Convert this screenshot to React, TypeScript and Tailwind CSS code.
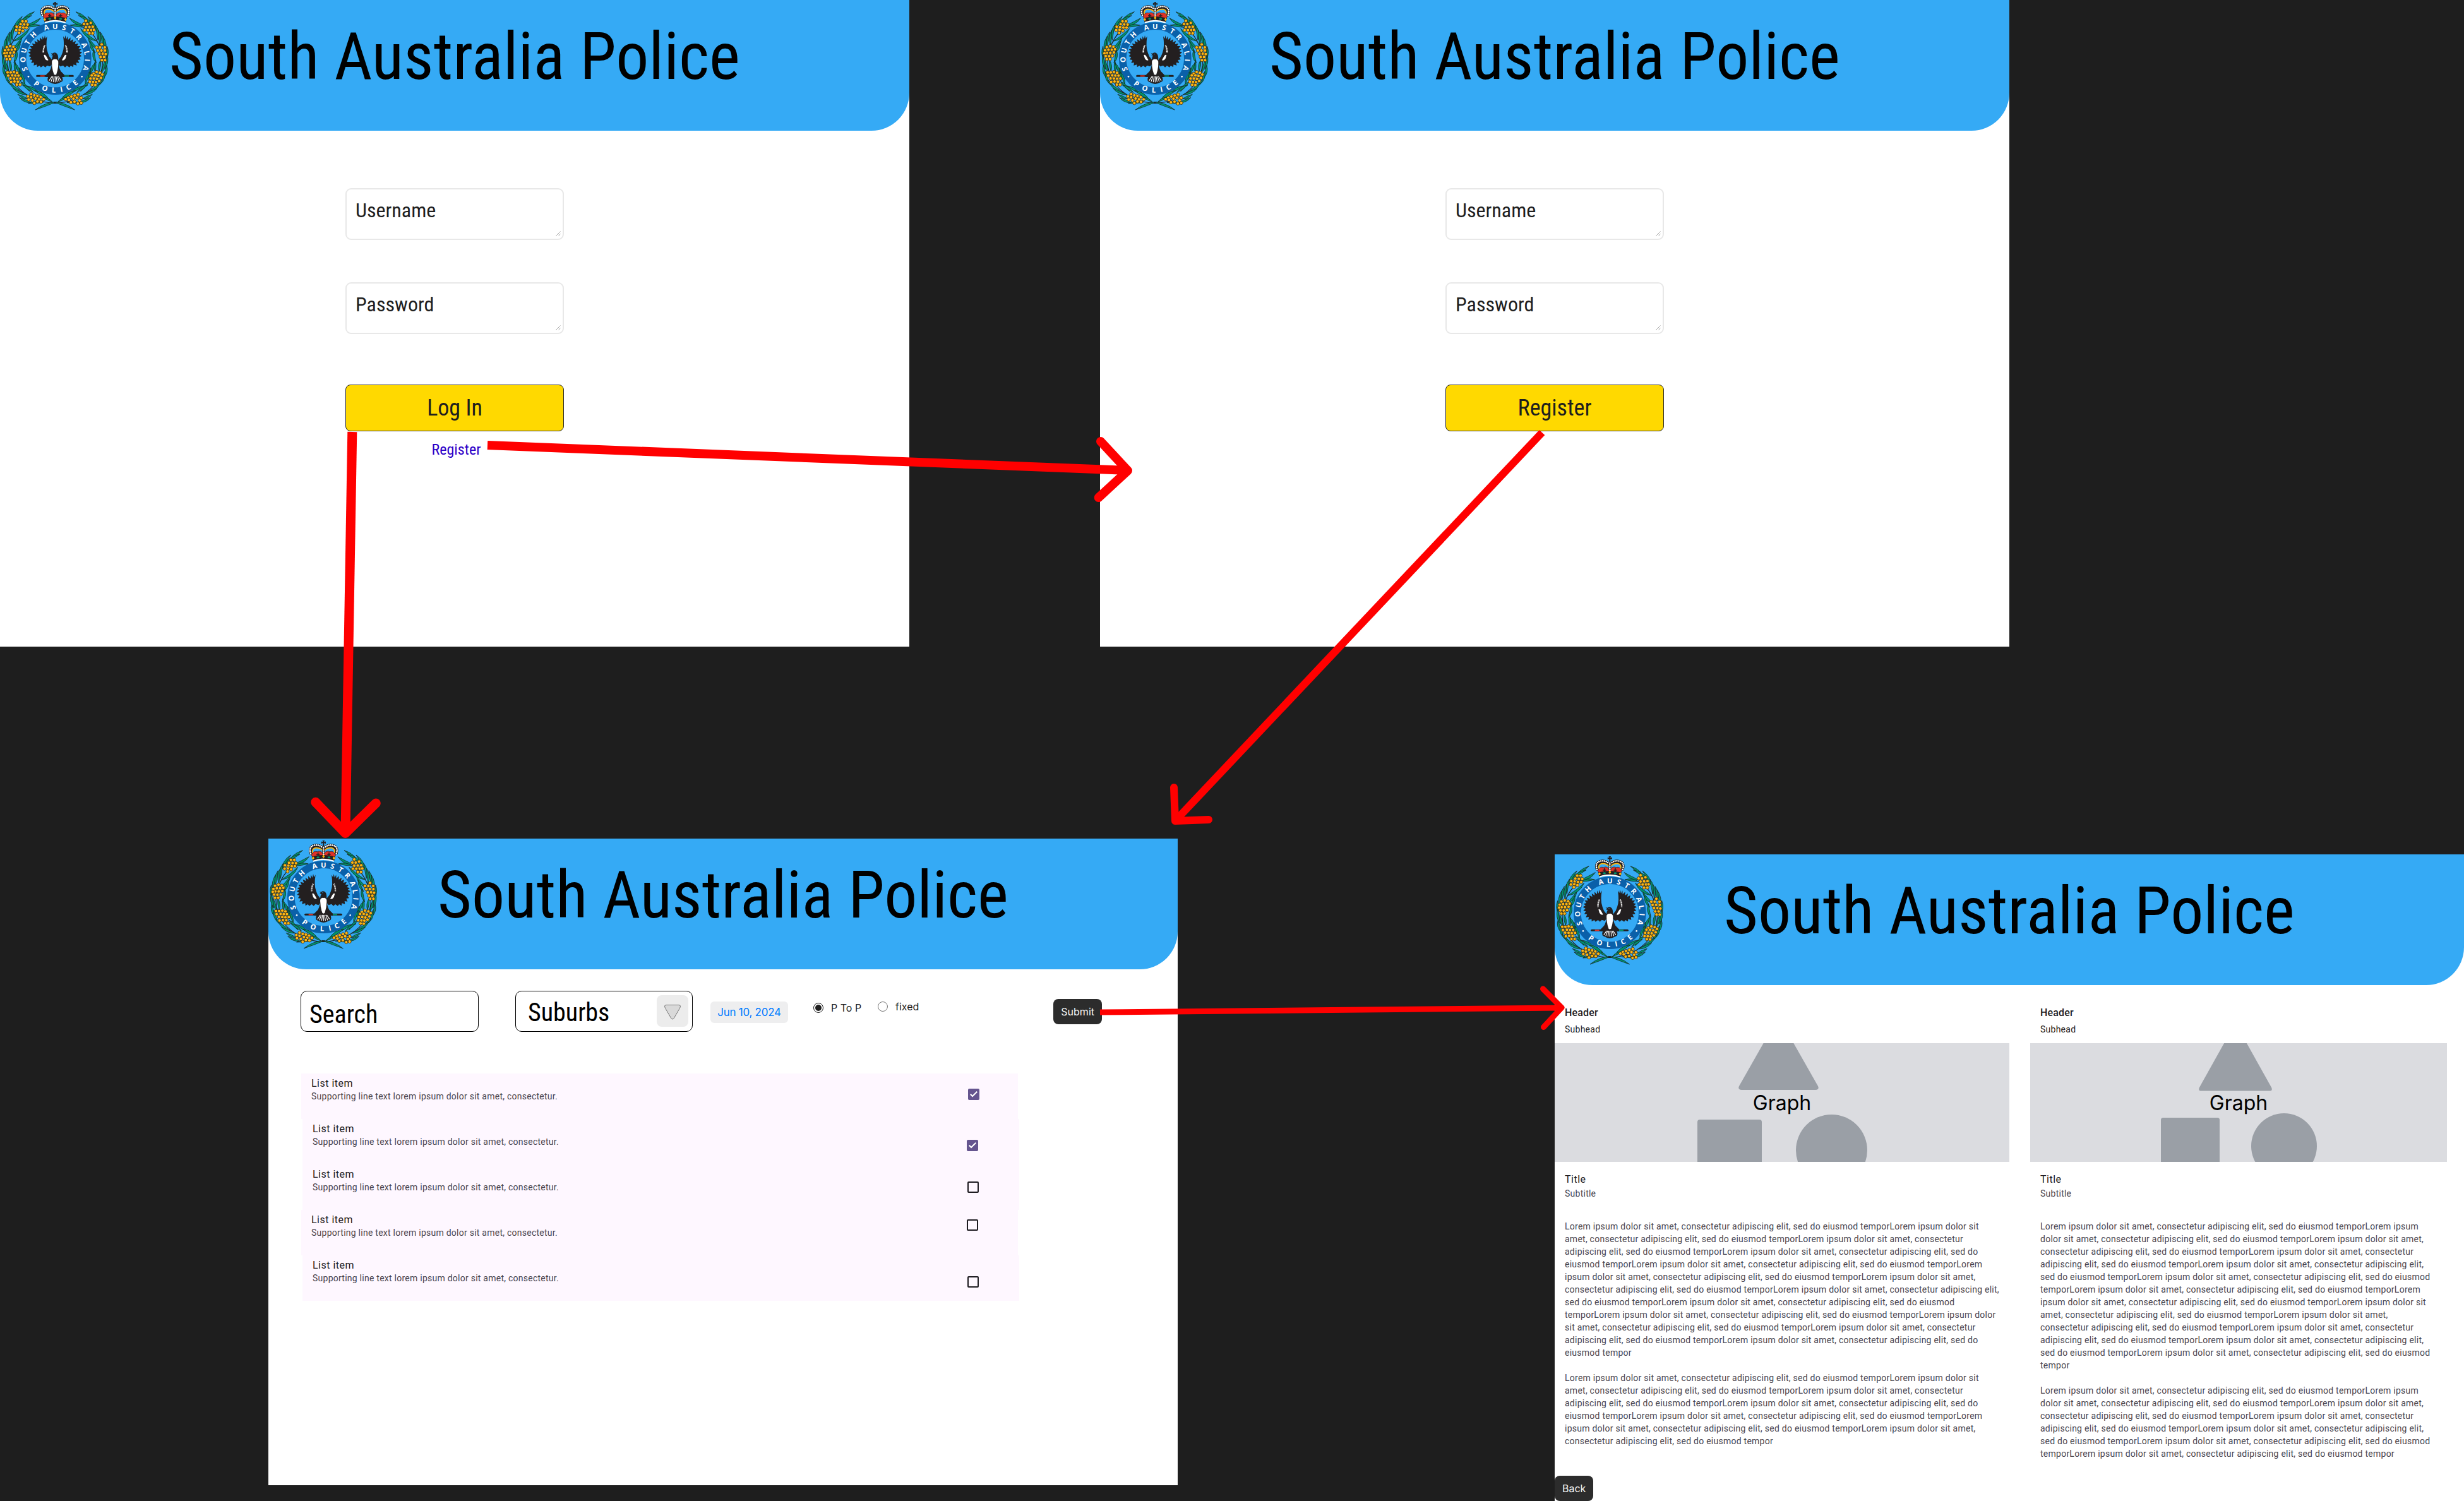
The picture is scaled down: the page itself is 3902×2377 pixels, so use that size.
import React from "react";

type Point = [number, number];
type LeafSpec = [number, number, number, number, number, number];

/* ---------- Emblem ---------- */

const RING_TOP: [string, number][] = [
  ["S", -109], ["O", -92], ["U", -75.5], ["T", -59.5], ["H", -42.6],
  ["A", -16], ["U", 0], ["S", 16.2], ["T", 32], ["R", 48], ["A", 65.5], ["L", 80], ["I", 93], ["A", 107.5],
];
const RING_BOTTOM: [string, number][] = [
  ["P", 36.4], ["O", 19], ["L", 2.5], ["I", -11.4], ["C", -25], ["E", -39.5],
];

const BERRIES: Point[] = [
  [107, 101], [123, 101], [98, 115], [115, 116], [131, 117], [79, 127], [95, 129], [111, 131], [126, 131], [77, 143], [93, 142], [108, 146], [91, 156],
  [48, 219], [64, 223], [32, 224], [56, 236], [40, 236], [71, 234], [24, 239], [33, 251], [49, 251], [66, 249], [21, 253], [27, 266], [43, 267], [59, 265], [32, 281], [47, 281],
  [36, 344], [51, 344], [66, 342], [81, 346], [39, 359], [58, 358], [73, 359], [88, 359], [50, 372], [66, 373], [81, 374], [97, 373], [53, 389], [69, 387], [85, 388], [80, 402], [95, 402],
  [148, 447], [133, 458], [148, 462], [163, 453], [178, 456], [193, 461], [136, 473], [154, 477], [169, 468], [185, 472], [207, 472], [163, 490], [178, 482], [195, 484],
  [408, 99], [399, 114], [415, 114], [431, 109], [425, 128], [408, 129], [441, 127], [402, 143], [418, 143], [434, 143], [425, 158], [440, 158], [446, 142],
  [483, 211], [459, 225], [475, 225], [498, 225], [465, 240], [482, 240], [499, 240], [472, 255], [488, 255], [502, 257], [478, 271], [494, 271], [484, 286], [499, 286],
  [459, 342], [445, 350], [475, 346], [436, 358], [453, 358], [468, 361], [486, 354], [430, 373], [446, 373], [461, 375], [480, 370], [427, 388], [442, 389], [456, 390], [471, 385], [438, 403], [453, 404],
  [371, 449], [355, 454], [339, 459], [324, 464], [365, 464], [386, 465], [312, 471], [328, 475], [349, 469], [378, 477], [337, 486], [354, 483], [370, 492], [386, 489],
];

/* base x/y, tip x/y, bend, half width */
const LEAVES: LeafSpec[] = [
  [122, 122, 193, 86, 12, 11], [124, 130, 190, 120, -6, 10], [88, 128, 163, 56, -16, 11], [72, 130, 150, 74, -14, 10],
  [62, 150, 106, 78, -10, 10], [58, 190, 70, 118, -10, 10], [62, 196, 140, 136, 16, 11], [50, 215, 56, 142, -8, 10],
  [34, 222, 46, 152, -8, 10], [22, 250, 34, 172, -8, 10], [58, 232, 105, 178, 12, 11], [70, 252, 96, 196, 10, 10],
  [18, 285, 14, 220, -6, 9], [66, 300, 78, 236, 10, 10], [26, 330, 14, 260, -8, 10], [40, 345, 24, 286, -4, 10],
  [52, 340, 44, 284, 4, 10], [70, 345, 68, 286, 6, 10], [92, 352, 72, 300, 6, 10], [30, 370, 16, 310, -8, 10],
  [42, 395, 26, 340, -6, 10], [98, 385, 92, 322, 8, 10], [118, 402, 96, 340, 6, 10], [66, 410, 36, 378, -6, 9],
  [108, 440, 46, 396, -8, 11], [128, 450, 62, 420, -8, 10], [140, 434, 98, 388, 6, 11], [158, 440, 106, 404, 6, 10],
  [132, 470, 84, 448, -4, 9], [150, 488, 92, 464, -6, 10], [190, 447, 128, 408, 8, 11], [236, 478, 164, 430, 10, 13],
  [205, 487, 134, 492, 6, 9], [268, 484, 168, 522, 8, 10], [250, 486, 204, 462, 4, 8],
];

const leafPath = ([x1, y1, x2, y2, bend, w]: LeafSpec) => {
  const dx = x2 - x1;
  const dy = y2 - y1;
  const len = Math.hypot(dx, dy);
  const nx = dy / len;
  const ny = -dx / len;
  const mx = (x1 + x2) / 2 - nx * bend;
  const my = (y1 + y2) / 2 - ny * bend;
  return `M${x1} ${y1}Q${mx + nx * w} ${my + ny * w} ${x2} ${y2}Q${mx - nx * w} ${my - ny * w} ${x1} ${y1}Z`;
};

function WreathSide() {
  return (
    <g>
      <path
        d="M268 490C200 490 120 462 74 402C36 350 28 300 42 246C56 196 84 150 130 118"
        fill="none"
        stroke="#1d1d1b"
        strokeWidth="3.5"
      />
      {LEAVES.map((leaf, i) => (
        <path key={i} d={leafPath(leaf)} fill="#00936d" stroke="#1a2421" strokeWidth="2.4" strokeLinejoin="round" />
      ))}
    </g>
  );
}

function Wing() {
  return (
    <g>
      <path
        d="M248 286L234 268L227 250Q216 222 224 172L217 184L213 168L209 186L202 172L201 190L189 178L190 195L176 186L179 202L164 194L168 210L152 206L158 219L142 219L151 231L137 235L147 243L134 250L146 257L136 267L148 271L141 283L154 285L148 299L162 297L160 311L175 307L176 319L188 312L194 320L206 312L215 320L224 311L238 316L248 304Z"
        fill="#231f20"
      />
      <path d="M213 215Q205 230 206 250" fill="none" stroke="#fff" strokeWidth="7" strokeDasharray="3.2 1.6" />
      <path d="M208 262Q214 256 220 268L230 286Q220 290 213 278Z" fill="#fff" />
    </g>
  );
}

function CrownHalf() {
  return (
    <g>
      <path d="M262 74Q250 54 232 62Q214 56 204 78L214 94L262 94Z" fill="#e03127" stroke="#231f20" strokeWidth="2" />
      <path d="M203 72Q196 42 220 36Q246 32 260 50" fill="none" stroke="#231f20" strokeWidth="16" />
      <path d="M210 68Q206 48 224 44Q244 42 258 56" fill="none" stroke="#fdb913" strokeWidth="5.5" />
      <path d="M201 72Q190 40 216 32Q240 26 258 44" fill="none" stroke="#231f20" strokeWidth="11" strokeLinecap="round" />
      <path d="M201 72Q190 40 216 32Q240 26 258 44" fill="none" stroke="#fff" strokeWidth="7.5" strokeLinecap="round" strokeDasharray="0.1 8.6" />
      <path d="M228 75h16M236 66v19" stroke="#231f20" strokeWidth="4.5" />
    </g>
  );
}

function Emblem() {
  return (
    <svg className="absolute top-0 left-0 h-[180px] w-[180px]" viewBox="0 0 540 540">
      <WreathSide />
      <g transform="translate(523 0) scale(-1 1)">
        <WreathSide />
      </g>
      {BERRIES.map(([x, y], i) => (
        <circle key={i} cx={x} cy={y} r="7.6" fill="#fdb515" stroke="#2a2413" strokeWidth="2.4" />
      ))}

      <circle cx="262" cy="278" r="154.5" fill="#35aaf5" stroke="#0a60a9" strokeWidth="35" />
      <g fill="#fff" fontFamily="Open Sans, sans-serif" fontWeight="700" fontSize="34" textAnchor="middle">
        {RING_TOP.map(([ch, a], i) => (
          <text key={i} x="262" y="137" transform={`rotate(${a} 262 278)`}>{ch}</text>
        ))}
        {RING_BOTTOM.map(([ch, a], i) => (
          <text key={i} x="262" y="440" transform={`rotate(${a} 262 278)`}>{ch}</text>
        ))}
      </g>
      <circle cx="135" cy="364" r="4" fill="#fff" />
      <circle cx="389" cy="364" r="4" fill="#fff" />

      {/* piping shrike */}
      <Wing />
      <g transform="translate(524 0) scale(-1 1)">
        <Wing />
      </g>
      <path d="M176 361H346" stroke="#231f20" strokeWidth="9" strokeLinecap="round" />
      <path d="M191 361H212" stroke="#e03127" strokeWidth="6" />
      <path d="M306 361H327" stroke="#00936d" strokeWidth="6" />
      <path d="M246 296Q244 334 228 346L218 356V366H306V356L296 346Q280 334 278 296Z" fill="#231f20" />
      <path d="M232 360Q222 374 228 386L240 392L250 397L262 399L274 397L284 392L296 386Q302 374 292 360Z" fill="#231f20" />
      <path
        d="M246 364L234 382M251 364L243 387M257 364L253 389M262 364V390M267 364L271 389M273 364L281 387M278 364L290 382"
        stroke="#fff"
        strokeWidth="3.4"
        strokeLinecap="round"
      />
      <path d="M247 284Q262 272 276 284Q280 318 268 352Q262 360 256 352Q244 318 247 284Z" fill="#fff" />
      <path d="M276 290Q280 258 266 251Q258 247 250 254L241 251L249 258L243 262L252 264Q246 272 246 290Q254 278 262 282Q270 278 276 290Z" fill="#231f20" />
      <circle cx="258" cy="257" r="1.8" fill="#35aaf5" />

      {/* crown */}
      <CrownHalf />
      <g transform="translate(524 0) scale(-1 1)">
        <CrownHalf />
      </g>
      <path d="M262 40V74" stroke="#231f20" strokeWidth="12" />
      <path d="M262 41V78" stroke="#fff" strokeWidth="7.5" strokeLinecap="round" strokeDasharray="0.1 8.6" />
      <path d="M262 10V38M252 19H272" stroke="#231f20" strokeWidth="6" />
      <path d="M257 11H267M253 14V24M271 14V24" stroke="#231f20" strokeWidth="3" />
      <path d="M206 86Q262 70 318 86L312 107Q262 92 212 107Z" fill="#231f20" />
      <path d="M212 104Q262 86 312 104L311 110Q262 94 213 110Z" fill="#fff" />
      <ellipse cx="236" cy="89" rx="7" ry="4.5" fill="#00936d" />
      <ellipse cx="288" cy="89" rx="7" ry="4.5" fill="#00936d" />
      <g fill="#fdb913">
        <path d="M262 76L268 85L262 94L256 85Z" />
        <path d="M213 85L219 93L213 100L206 93Z" />
        <path d="M311 85L318 93L311 100L305 93Z" />
      </g>
    </svg>
  );
}

/* ---------- Shared pieces ---------- */

function Header() {
  return (
    <header className="relative h-[207px] shrink-0 rounded-b-[60px] bg-[#35aaf5] pt-[29px]">
      <Emblem />
      <h1 className="text-center font-['Roboto_Condensed'] text-[104px] leading-[121px] text-black">
        South Australia Police
      </h1>
    </header>
  );
}

function Field({ label }: { label: string }) {
  return (
    <div className="relative h-[82px] w-[346px] rounded-[9px] border-2 border-[#e8e8e8] bg-white pt-[14px] pl-[14px] font-['Roboto_Condensed'] text-[32px] leading-[38px] text-[#1e1e1e]">
      {label}
      <svg className="absolute right-[3px] bottom-[4px] h-2 w-2" viewBox="0 0 8 8">
        <path d="M0.5 7.5L7.5 0.5M4.5 7.5L7.5 4.5" stroke="#a3a3a3" fill="none" />
      </svg>
    </div>
  );
}

function YellowButton({ children }: { children: React.ReactNode }) {
  return (
    <button className="mt-20 flex h-[74px] w-[346px] items-center justify-center rounded-lg border border-[#2c2c2c] bg-[#ffd900] font-['Roboto_Condensed'] text-[36px] leading-[42px] text-[#1e1e1e]">
      {children}
    </button>
  );
}

function DarkButton({ children }: { children: React.ReactNode }) {
  return (
    <button className="flex h-10 items-center rounded-lg bg-[#2c2c2c] px-3 font-['Inter'] text-base leading-none text-[#f5f5f5]">
      {children}
    </button>
  );
}

function AuthScreen({ action, link }: { action: string; link?: string }) {
  return (
    <>
      <Header />
      <div className="flex flex-col items-center pt-[91px]">
        <Field label="Username" />
        <div className="mt-[67px]">
          <Field label="Password" />
        </div>
        <YellowButton>{action}</YellowButton>
        {link && (
          <a className="mt-[15px] pl-[5px] font-['Roboto_Condensed'] text-2xl leading-7 text-[#2d00c8]">{link}</a>
        )}
      </div>
    </>
  );
}

/* ---------- Search screen ---------- */

const ROWS = [
  { checked: true, row: "ml-[52px]", box: "mt-6 mr-[61px]" },
  { checked: true, row: "ml-[54px]", box: "mt-[33px] mr-[65px]" },
  { checked: false, row: "ml-[54px]", box: "mt-[27px] mr-16" },
  { checked: false, row: "ml-[52px]", box: "mt-[15px] mr-[63px]" },
  { checked: false, row: "ml-[54px]", box: "mt-[33px] mr-16" },
];

function Checkbox({ checked, className }: { checked: boolean; className: string }) {
  return (
    <div className={className}>
      {checked ? (
        <div className="h-[18px] w-[18px] rounded-xs bg-[#65558f]">
          <svg viewBox="0 0 18 18" className="h-[18px] w-[18px]">
            <path d="M3.8 8.8L7 12L14.3 4.7" fill="none" stroke="#fff" strokeWidth="2" />
          </svg>
        </div>
      ) : (
        <div className="h-[18px] w-[18px] rounded-xs border-2 border-[#1d1b20]" />
      )}
    </div>
  );
}

function SearchScreen() {
  return (
    <>
      <Header />
      <div className="flex items-start pt-[34px] pr-[120px] pl-[51px]">
        <div className="h-[65px] w-[282px] rounded-[10px] border border-black pt-[13px] pl-[13px] font-['Roboto_Condensed'] text-[40px] leading-[47px] text-black">
          Search
        </div>
        <div className="ml-[58px] flex h-[65px] w-[281px] items-start justify-between rounded-[10px] border border-black pr-[6px] pl-[19px]">
          <span className="pt-[10px] font-['Roboto_Condensed'] text-[40px] leading-[47px] text-black">Suburbs</span>
          <div className="mt-[6px] flex h-[50px] w-[50px] items-center justify-center rounded-lg bg-[#ececec]">
            <svg viewBox="0 0 28 26" className="mt-[3px] h-[26px] w-[28px]">
              <path
                d="M4 1.5H24Q28 2 25.5 6.5L16.5 22Q14 26 11.5 22L2.5 6.5Q0 2 4 1.5Z"
                fill="#d9d9d9"
                stroke="#757575"
                strokeWidth="1"
              />
            </svg>
          </div>
        </div>
        <div className="mt-[17px] ml-7 flex h-[34px] w-[123px] items-center justify-center rounded-md bg-[#eeeeef] font-['Inter'] text-[17px] leading-none tracking-[-0.26px] whitespace-nowrap text-[#007aff]">
          Jun 10, 2024
        </div>
        <label className="mt-[19px] ml-10 flex h-4 w-[102px] items-center gap-3 font-['Inter'] text-base leading-4 text-[#1e1e1e]">
          <span className="flex h-4 w-4 items-center justify-center rounded-full border border-[#1e1e1e]">
            <span className="h-[10px] w-[10px] rounded-full bg-[#1e1e1e]" />
          </span>
          P To P
        </label>
        <label className="mt-[17px] flex h-4 items-center gap-3 font-['Inter'] text-base leading-4 text-[#1e1e1e]">
          <span className="h-4 w-4 rounded-full border border-[#757575]" />
          fixed
        </label>
        <div className="mt-[13px] ml-auto">
          <DarkButton>Submit</DarkButton>
        </div>
      </div>

      <ul className="mt-[66px] font-['Roboto']">
        {ROWS.map((r, i) => (
          <li key={i} className={`${r.row} flex h-[72px] w-[1135px] items-start justify-between bg-[#fef7ff] pl-4`}>
            <div className="pt-[5px]">
              <p className="text-base leading-[22px] tracking-[0.5px] text-[#1d1b20]">List item</p>
              <p className="text-sm leading-[19px] tracking-[0.25px] text-[#49454f]">
                Supporting line text lorem ipsum dolor sit amet, consectetur.
              </p>
            </div>
            <Checkbox checked={r.checked} className={r.box} />
          </li>
        ))}
      </ul>
    </>
  );
}

/* ---------- Report screen ---------- */

const SENTENCE = "Lorem ipsum dolor sit amet, consectetur adipiscing elit, sed do eiusmod tempor";

function ReportCard({ className, art }: { className: string; art: React.ReactNode }) {
  return (
    <section className={`${className} font-['Roboto'] text-sm leading-5 tracking-[0.25px] text-[#49454f]`}>
      <div className="px-4 pt-8 pb-3">
        <h2 className="text-base leading-6 font-medium tracking-[0.15px] text-[#1d1b20]">Header</h2>
        <p className="mt-1 text-[#1d1b20]">Subhead</p>
      </div>
      <div className="relative flex h-[188px] items-center justify-center overflow-hidden bg-[#dbdce0]">
        {art}
        <span className="relative font-['Inter'] text-[32px] leading-[39px] tracking-normal text-black">Graph</span>
      </div>
      <div className="px-4 pt-4">
        <h3 className="text-base leading-6 tracking-[0.5px] text-[#1d1b20]">Title</h3>
        <p>Subtitle</p>
        <p className="mt-8">{SENTENCE.repeat(13)}</p>
        <p className="mt-5">{SENTENCE.repeat(7)}</p>
      </div>
    </section>
  );
}

function ReportScreen() {
  return (
    <div className="flex h-full flex-col">
      <Header />
      <div className="flex gap-[33px]">
        <ReportCard
          className="w-[720px]"
          art={
            <svg viewBox="0 0 720 188" className="absolute inset-0 h-[188px] w-[720px]" fill="#9a9fa6">
              <path d="M354.5 -42L417 68Q419.500 74 413 74H296Q289.500 74 292 68Z" />
              <rect x="226" y="121" width="102" height="100" rx="4" />
              <circle cx="438.500" cy="169.500" r="56.500" />
            </svg>
          }
        />
        <ReportCard
          className="w-[660px]"
          art={
            <svg viewBox="0 0 660 188" className="absolute inset-0 h-[188px] w-[660px]" fill="#9a9fa6">
              <path d="M325 -32L382 70Q384.500 75.500 379 75.500H271Q265.500 75.500 268 70Z" />
              <rect x="207" y="118" width="93" height="100" rx="3.500" />
              <circle cx="402" cy="163" r="52" />
            </svg>
          }
        />
      </div>
      <div className="mt-auto flex">
        <DarkButton>Back</DarkButton>
      </div>
    </div>
  );
}

/* ---------- Canvas ---------- */

function FlowArrows() {
  return (
    <svg
      className="pointer-events-none absolute inset-0 h-[2377px] w-[3902px]"
      viewBox="0 0 3902 2377"
      fill="none"
      stroke="#ff0000"
      strokeLinejoin="round"
    >
      <g strokeWidth="15">
        <path d="M557.800 684L547 1319" />
        <path d="M499.700 1270.300L547 1319.500L595.300 1272" strokeLinecap="round" />
      </g>
      <g strokeWidth="14">
        <path d="M772 705L1786 745" />
        <path d="M1743 699L1786 745.300L1739.700 788" strokeLinecap="round" />
      </g>
      <g strokeWidth="12">
        <path d="M2442 685L1861 1300" />
        <path d="M1859 1247L1861 1300L1914 1298" strokeLinecap="round" />
      </g>
      <g strokeWidth="9">
        <path d="M1742 1603L2473 1596" />
        <path d="M2443.500 1566L2473 1595.700L2444.500 1626.500" strokeLinecap="round" />
      </g>
    </svg>
  );
}

export default function App() {
  return (
    <div className="relative h-[2377px] w-[3902px] overflow-hidden bg-[#1e1e1e]">
      <div className="absolute top-0 left-0 h-[1024px] w-[1440px] bg-white">
        <AuthScreen action="Log In" link="Register" />
      </div>
      <div className="absolute top-0 left-[1742px] h-[1024px] w-[1440px] bg-white">
        <AuthScreen action="Register" />
      </div>
      <div className="absolute top-[1328px] left-[425px] h-[1024px] w-[1440px] bg-white">
        <SearchScreen />
      </div>
      <div className="absolute top-[1353px] left-[2462px] h-[1024px] w-[1440px] bg-white">
        <ReportScreen />
      </div>
      <FlowArrows />
    </div>
  );
}
